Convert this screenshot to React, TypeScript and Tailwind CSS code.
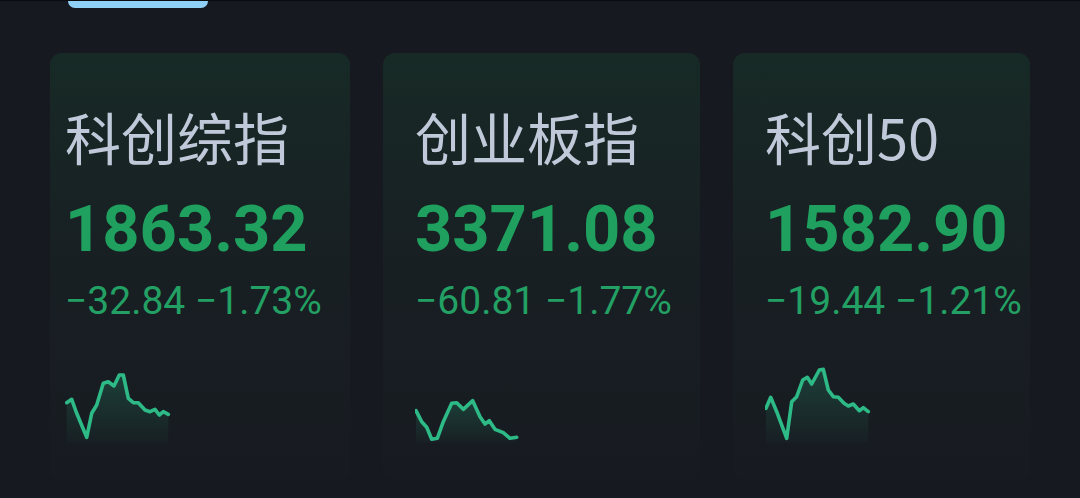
import React from "react";

type Card = {
  title: string;
  value: string;
  change: string;
  cardClass: string;
  pts: [number, number][];
};

const cards: Card[] = [
  {
    title: "科创综指",
    value: "1863.32",
    change: "−32.84 −1.73%",
    cardClass: "ml-[50px] w-[300px] pl-[15px]",
    pts: [
      [66.7, 402.7], [71.7, 399.3], [76.7, 413.3], [86.7, 437.3], [91.7, 413.3], [96.7, 405],
      [103.3, 383.3], [108.3, 381.7], [114, 386], [119.3, 375], [123.3, 375], [128.3, 398.3],
      [133.3, 402.7], [138.3, 402.7], [145, 410], [150, 411.7], [155, 409.3], [159.3, 415],
      [163.3, 411.7], [168.3, 414.3],
    ].map(([x, y]) => [x - 65, y - 365] as [number, number]),
  },
  {
    title: "创业板指",
    value: "3371.08",
    change: "−60.81 −1.77%",
    cardClass: "ml-[33px] w-[317px] pl-[32px]",
    pts: [
      [416, 410.7], [421.7, 421.7], [426.7, 427.3], [431.7, 439.3], [437.3, 438.3], [443.3, 421.7],
      [451.7, 403.3], [456.7, 402.7], [463.3, 409.3], [472.7, 400.7], [480, 416.7], [485, 424],
      [489.3, 420.7], [495, 429.3], [503.3, 432.7], [510, 438.3], [516.7, 437.3],
    ].map(([x, y]) => [x - 415, y - 365] as [number, number]),
  },
  {
    title: "科创50",
    value: "1582.90",
    change: "−19.44 −1.21%",
    cardClass: "ml-[33px] w-[297px] pl-[32px]",
    pts: [
      [766, 408.3], [770.7, 397.3], [776.7, 411.7], [786.7, 438.3], [791.7, 401.7], [796.7, 396.7],
      [802.7, 380], [807.3, 377.3], [811.7, 384], [819.3, 370], [823.3, 369.3], [828.3, 390],
      [833.3, 396.7], [838.3, 397.3], [844, 403.3], [848.3, 406], [853.3, 404], [859.3, 410.7],
      [863.3, 407.7], [868.3, 411.7],
    ].map(([x, y]) => [x - 765, y - 365] as [number, number]),
  },
];

function Spark({ pts, id }: { pts: [number, number][]; id: string }) {
  const line = pts.map(([x, y]) => `${x},${y}`).join(" ");
  const first = pts[0];
  const last = pts[pts.length - 1];
  const area = `M${first[0]},78 L${line.split(" ").join(" L")} L${last[0]},78 Z`;
  return (
    <svg width="112" height="82" viewBox="0 0 112 82" className="block">
      <defs>
        <linearGradient id={id} x1="0" y1="0" x2="0" y2="1">
          <stop offset="0" stopColor="#2dba87" stopOpacity="0.22" />
          <stop offset="1" stopColor="#2dba87" stopOpacity="0.02" />
        </linearGradient>
      </defs>
      <path d={area} fill={`url(#${id})`} />
      <polyline
        points={line}
        fill="none"
        stroke="#2dba87"
        strokeWidth="3.6"
        strokeLinejoin="round"
        strokeLinecap="round"
      />
    </svg>
  );
}

export default function App() {
  return (
    <div className="w-[1080px] h-[498px] overflow-hidden bg-[#161920] relative">
      <div className="h-[1px] bg-[#0a0b0e]" />
      <div className="h-[7px] ml-[68px] w-[140px] bg-[#8fd0f7] rounded-b-[16px]" />
      <div className="flex mt-[45px]">
        {cards.map((c, i) => (
          <div
            key={i}
            className={`${c.cardClass} h-[427px] rounded-[12px] bg-gradient-to-b from-[#172a26] via-[#181f23] to-[#171b21] pt-[55px]`}
          >
            <div
              className="text-[56px] leading-[56px] text-[#bfc9d9] whitespace-nowrap"
              style={{ fontFamily: '"Noto Sans CJK SC", "Noto Sans", sans-serif' }}
            >
              {c.title}
            </div>
            <div
              className="mt-[32px] text-[65px] leading-[66px] font-bold text-[#1fa05e] whitespace-nowrap"
              style={{ fontFamily: 'Roboto, "Noto Sans", sans-serif' }}
            >
              {c.value}
            </div>
            <div
              className="mt-[20px] text-[39px] leading-[39px] text-[#23a063] whitespace-nowrap"
              style={{ fontFamily: 'Roboto, "Noto Sans", sans-serif' }}
            >
              {c.change}
            </div>
            <div className="mt-[44px]">
              <Spark pts={c.pts} id={`g${i}`} />
            </div>
          </div>
        ))}
      </div>
    </div>
  );
}
